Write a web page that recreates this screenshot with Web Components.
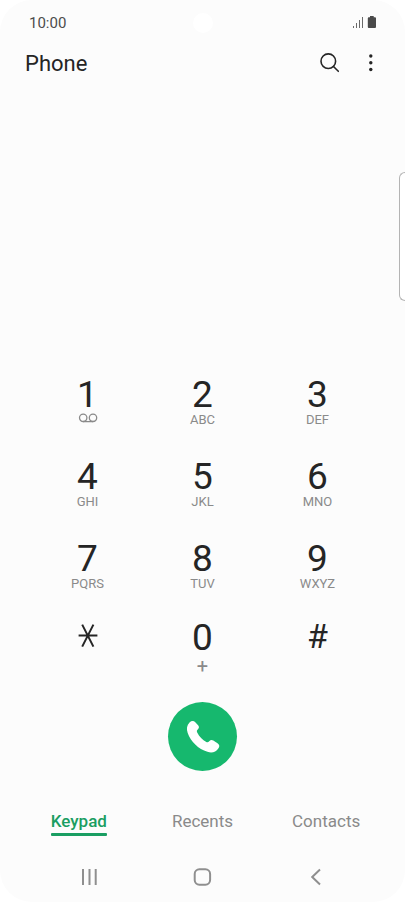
<!DOCTYPE html>
<html lang="en">
<head>
<meta charset="utf-8">
<meta name="viewport" content="width=device-width, initial-scale=1">
<title>Phone</title>
<style>
  body { margin: 0; background: #fff; color: #252525; font-family: Roboto, "Liberation Sans", sans-serif; }
</style>
</head>
<body>
<phone-screen>
  <status-bar slot="top" time="10:00"></status-bar>
  <app-bar slot="top">Phone</app-bar>
  <key-pad>
    <dial-key digit="1" icon="voicemail"></dial-key>
    <dial-key digit="2">ABC</dial-key>
    <dial-key digit="3">DEF</dial-key>
    <dial-key digit="4">GHI</dial-key>
    <dial-key digit="5">JKL</dial-key>
    <dial-key digit="6">MNO</dial-key>
    <dial-key digit="7">PQRS</dial-key>
    <dial-key digit="8">TUV</dial-key>
    <dial-key digit="9">WXYZ</dial-key>
    <dial-key icon="star"></dial-key>
    <dial-key digit="0" large>+</dial-key>
    <dial-key digit="#" symbol></dial-key>
  </key-pad>
  <call-button></call-button>
  <tab-bar>
    <tab-link current>Keypad</tab-link>
    <tab-link>Recents</tab-link>
    <tab-link>Contacts</tab-link>
  </tab-bar>
  <system-nav></system-nav>
</phone-screen>
<script>
const base = `
  <style>
    *, :host { box-sizing: border-box; }
    button { margin: 0; padding: 0; border: 0; background: none; color: inherit; font: inherit; cursor: pointer; }
    svg { display: block; }
  </style>`;

function define(name, render) {
  customElements.define(name, class extends HTMLElement {
    constructor() {
      super();
      this.attachShadow({ mode: "open" });
    }
    connectedCallback() {
      this.shadowRoot.innerHTML = base + render(this);
    }
  });
}

define("phone-screen", () => `
  <style>
    :host { display: flex; flex-direction: column; position: relative; overflow: hidden;
      min-height: 100vh; border-radius: 32px; background: #fcfcfc; }
    .space { flex: 1; }
    .edge { position: absolute; top: 172px; right: 0; width: 6px; height: 129px;
      border: 1px solid #b4b4b4; border-right: 0; border-radius: 6px 0 0 6px; background: #fff; }
  </style>
  <slot name="top"></slot>
  <div class="space"></div>
  <slot></slot>
  <div class="edge"></div>`);

define("status-bar", host => `
  <style>
    :host { display: grid; grid-template-columns: 1fr auto 1fr; align-items: center; height: 46px;
      padding: 0 28px 0 29px; font-size: 15px; line-height: 20px; color: #4c4c4c; }
    .camera { width: 20px; height: 20px; border-radius: 50%; background: #fff; }
    svg { justify-self: end; }
  </style>
  <span>${host.getAttribute("time")}</span>
  <span class="camera"></span>
  <svg width="25" height="14" viewBox="0 0 25 14" role="img" aria-label="Signal and battery">
    <path fill="#6a6a6a" d="M1 10h1v2H1zM4 7h1v5H4zM7 4h1v8H7zM10 1h1v11h-1z"/>
    <path fill="#4a4a4a" d="M18 0h3.700v1.300H23a1 1 0 0 1 1 1V11a1 1 0 0 1-1 1h-6.200a1 1 0 0 1-1-1V2.300a1 1 0 0 1 1-1H18z"/>
  </svg>`);

define("app-bar", () => `
  <style>
    :host { display: flex; align-items: center; height: 34px; padding: 0 22px 0 25px; }
    h1 { flex: 1; margin: 0; font-size: 22px; font-weight: 400; line-height: 30px; padding-top: 2px; }
    button { display: grid; place-items: center; width: 24px; height: 28px; }
    button + button { margin-left: 17px; }
  </style>
  <h1><slot></slot></h1>
  <button type="button" aria-label="Search">
    <svg width="24" height="24" viewBox="0 0 24 24" fill="none" stroke="#252525" stroke-width="1.600" stroke-linecap="round">
      <circle cx="10.300" cy="10.200" r="7.300"/><path d="M15.500 15.500 20.300 20.300"/>
    </svg>
  </button>
  <button type="button" aria-label="More options">
    <svg width="24" height="24" viewBox="0 0 24 24" fill="#252525">
      <circle cx="11.800" cy="5" r="1.700"/><circle cx="11.800" cy="11.700" r="1.700"/><circle cx="11.800" cy="18.500" r="1.700"/>
    </svg>
  </button>`);

define("key-pad", () => `
  <style>
    :host { display: grid; grid-template-columns: repeat(3, 1fr); grid-template-rows: 82px 82px 79px 58px;
      padding: 0 30px; margin-bottom: 24px; }
  </style>
  <slot></slot>`);

const voicemail = `
  <svg width="20" height="14" viewBox="0 0 20 14" fill="none" stroke="#8a8a8a" stroke-width="1.300" role="img" aria-label="Voicemail">
    <circle cx="5.200" cy="4.800" r="3.700"/><circle cx="15" cy="4.800" r="3.700"/><path d="M5 8.600H15"/>
  </svg>`;
const star = `
  <svg width="24" height="36" viewBox="0 0 24 36" fill="none" stroke="#252525" stroke-width="2">
    <path d="M2.600 15.500H21.400M6.200 4.600 17.400 26.600M17.400 4.600 6.200 26.600"/>
  </svg>`;

define("dial-key", host => {
  const digit = host.getAttribute("digit");
  const icon = host.getAttribute("icon");
  return `
  <style>
    :host { display: flex; justify-content: center; align-items: flex-start; }
    button { display: flex; flex-direction: column; align-items: center; width: 80px; }
    .digit { font-size: 37px; line-height: 36px; }
    .letters { font-size: 13px; line-height: 14px; color: #8a8a8a; }
    :host([large]) .letters { font-size: 20px; line-height: 20px; }
    :host([symbol]) .digit { font-size: 34px; line-height: 32px; }
  </style>
  <button type="button"${icon === "star" ? ' aria-label="Star"' : ""}>
    ${icon === "star" ? star : `<span class="digit">${digit}</span>`}
    ${icon === "voicemail" ? voicemail : icon === "star" || digit === "#" ? "" : `<span class="letters"><slot></slot></span>`}
  </button>`;
});

define("call-button", () => `
  <style>
    :host { display: flex; justify-content: center; margin-bottom: 38px; }
    button { display: grid; place-items: center; width: 69px; height: 69px; border-radius: 50%; background: #16b86e; }
  </style>
  <button type="button" aria-label="Call">
    <svg width="36" height="36" viewBox="0 0 36 36" fill="#fff">
      <path d="M4.500 3.400C6.500 1.500 8.700 1.400 10.300 3.200L13.300 6.600C14.300 8 14.100 9.200 13 10.200C11.700 11.300 11.600 12.200 12.200 13.400C14.200 17.600 17.600 21 21.300 22.900C22.500 23.500 23.300 23.200 24.200 22.300C25.500 20.900 26.800 20.700 28.300 21.600L32.500 24.200C34.700 25.700 34.900 27.500 33.300 29.500C30.800 32.900 27.200 34.300 22.500 32.800C13.300 29.800 5.800 22.700 2.700 13.900C1.300 9.800 1.800 6 4.500 3.400Z"/>
    </svg>
  </button>`);

define("tab-bar", () => `
  <style>
    nav { display: grid; grid-template-columns: repeat(3, 1fr); height: 43px; padding: 0 17px; }
  </style>
  <nav aria-label="Sections"><slot></slot></nav>`);

define("tab-link", host => `
  <style>
    :host { display: flex; justify-content: center; align-items: flex-start; }
    a { display: block; font-size: 17px; line-height: 24px; color: #8a8a8a; text-decoration: none; }
    :host([current]) a { color: #1a9e62; font-weight: 500; }
    :host([current]) a::after { content: ""; display: block; height: 3px; border-radius: 1px; background: #1a9e62; }
  </style>
  <a href="#"${host.hasAttribute("current") ? ' aria-current="page"' : ""}><slot></slot></a>`);

define("system-nav", () => `
  <style>
    nav { display: grid; grid-template-columns: repeat(3, 1fr); place-items: center; height: 50px; padding: 0 32px; }
    button { display: grid; place-items: center; width: 48px; height: 40px; }
    svg { fill: none; stroke: #8f8f8f; stroke-width: 2; }
  </style>
  <nav aria-label="System">
    <button type="button" aria-label="Recent apps">
      <svg width="24" height="24" viewBox="0 0 24 24"><path d="M6 4V20M12.500 4V20M18.700 4V20"/></svg>
    </button>
    <button type="button" aria-label="Home">
      <svg width="24" height="24" viewBox="0 0 24 24"><rect x="4.700" y="4.300" width="15.400" height="15.400" rx="4.700"/></svg>
    </button>
    <button type="button" aria-label="Back">
      <svg width="24" height="24" viewBox="0 0 24 24"><path d="M16 4.500 8.200 12 16 19.500"/></svg>
    </button>
  </nav>`);
</script>
</body>
</html>
